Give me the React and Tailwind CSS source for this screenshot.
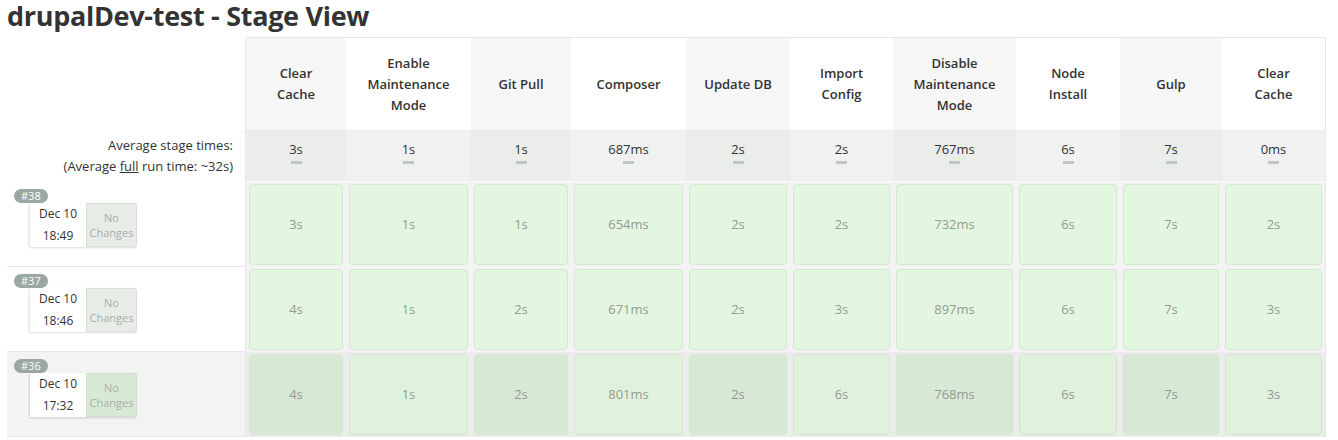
import React from "react";

// stage columns, widths measured from the screenshot
const stages = [
  { name: ["Clear", "Cache"], avg: "3s", w: "w-[100px]", odd: true },
  { name: ["Enable", "Maintenance", "Mode"], avg: "1s", w: "w-[125px]", odd: false },
  { name: ["Git Pull"], avg: "1s", w: "w-[100px]", odd: true },
  { name: ["Composer"], avg: "687ms", w: "w-[115px]", odd: false },
  { name: ["Update DB"], avg: "2s", w: "w-[104px]", odd: true },
  { name: ["Import", "Config"], avg: "2s", w: "w-[103px]", odd: false },
  { name: ["Disable", "Maintenance", "Mode"], avg: "767ms", w: "w-[123px]", odd: true },
  { name: ["Node", "Install"], avg: "6s", w: "w-[104px]", odd: false },
  { name: ["Gulp"], avg: "7s", w: "w-[102px]", odd: true },
  { name: ["Clear", "Cache"], avg: "0ms", w: "w-[103px]", odd: false },
];

const runs = [
  { id: 38, date: "Dec 10", time: "18:49", times: ["3s", "1s", "1s", "654ms", "2s", "2s", "732ms", "6s", "7s", "2s"] },
  { id: 37, date: "Dec 10", time: "18:46", times: ["4s", "1s", "2s", "671ms", "2s", "3s", "897ms", "6s", "7s", "3s"] },
  { id: 36, date: "Dec 10", time: "17:32", times: ["4s", "1s", "2s", "801ms", "2s", "6s", "768ms", "6s", "7s", "3s"], hover: true },
];

const RunLabel = ({ run }) => (
  <div
    className={`flex w-[238px] shrink-0 flex-col items-start pt-[7px] pl-[7px] border-b border-[#e6e6e6] ${
      run.hover ? "bg-[#f3f3f3]" : "bg-white"
    }`}
  >
    <div className="rounded-full bg-[#9ba7a2] px-[7px] text-[11px] leading-[14px] text-white">#{run.id}</div>
    <div className="ml-[16px] flex h-[44px] w-[107px] shadow-[-1px_1px_2px_rgba(0,0,0,0.15)]">
      <div className="flex w-[56px] flex-col items-center justify-center gap-[6px] bg-white text-[12px] leading-[16px] text-[#333]">
        <span>{run.date}</span>
        <span>{run.time}</span>
      </div>
      <div
        className={`flex w-[51px] flex-col items-center justify-center rounded-r-[3px] border border-dotted border-[#c9d3c9] text-[11px] leading-[15px] text-[#a8aea8] ${
          run.hover ? "bg-[#d8ead5]" : "bg-[#e8ece7]"
        }`}
      >
        <span>No</span>
        <span>Changes</span>
      </div>
    </div>
  </div>
);

const App = () => {
  return (
    <div className="h-[440px] w-[1338px] overflow-hidden bg-white font-['Open_Sans',sans-serif] text-[#333]">
      <h1 className="pl-[7px] text-[27px] font-bold leading-[32px] tracking-[-0.3px] text-[#333]">
        drupalDev-test - Stage View
      </h1>

      <div className="mt-[5px] pl-[7px]">
        {/* stage headers */}
        <div className="flex">
          <div className="w-[238px] shrink-0" />
          <div className="flex rounded-tl-[3px] border-t border-l border-r border-[#e6e6e6]">
            {stages.map((s, i) => (
              <div
                key={i}
                className={`${s.w} flex h-[92px] flex-col items-center justify-center text-center text-[13px] font-semibold leading-[21px] text-[#333] ${
                  s.odd ? "bg-[#f6f6f6]" : "bg-white"
                }`}
              >
                {s.name.map((line) => (
                  <span key={line}>{line}</span>
                ))}
              </div>
            ))}
          </div>
        </div>

        {/* average stage times */}
        <div className="flex">
          <div className="flex h-[51px] w-[238px] shrink-0 flex-col items-end justify-center pr-[12px] text-[13px] leading-[21px] text-[#333]">
            <span>Average stage times:</span>
            <span>
              (Average <span className="underline">full</span> run time: ~32s)
            </span>
          </div>
          <div className="flex border-l border-r border-b border-dotted border-[#cfe3cc]">
            {stages.map((s, i) => (
              <div
                key={i}
                className={`${s.w} flex h-[50px] flex-col items-center justify-center pb-[7px] ${
                  s.odd ? "bg-[#eaedea]" : "bg-[#f1f1f1]"
                }`}
              >
                <span className="text-[13px] leading-[20px] text-[#333]">{s.avg}</span>
                <span className="mt-[2px] h-[3px] w-[11px] bg-[#bcc8c1]" />
              </div>
            ))}
          </div>
        </div>

        {/* builds */}
        <div className="mt-[1px]">
          {runs.map((run) => (
            <div key={run.id} className="flex">
              <RunLabel run={run} />
              <div className={`flex border-l border-r border-[#e6e6e6] ${run.hover ? "bg-[#ececec]" : "bg-[#f3f3f3]"}`}>
                {stages.map((s, i) => (
                  <div key={i} className={`${s.w} h-[85px] px-[3px] py-[2px]`}>
                    <div
                      className={`flex h-full items-center justify-center rounded-[4px] border text-[13px] text-[#959995] ${
                        run.hover && s.odd
                          ? "border-[#d4e6d1] bg-[#d7e8d4]"
                          : run.hover
                          ? "border-[#d2e6cf] bg-[#e0f2dc]"
                          : "border-[#d3e8d0] bg-[#e3f7e0]"
                      }`}
                    >
                      {run.times[i]}
                    </div>
                  </div>
                ))}
              </div>
            </div>
          ))}
        </div>
      </div>
    </div>
  );
};

export default App;
